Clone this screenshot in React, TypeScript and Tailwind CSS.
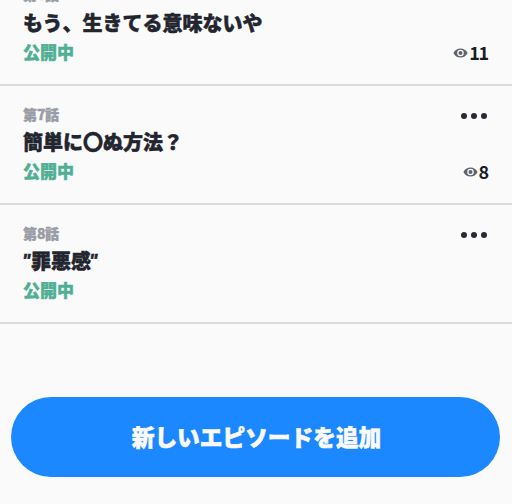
type Episode = { no: number; title: string; views?: number };

const episodes: Episode[] = [
  { no: 6, title: 'もう、生きてる意味ないや', views: 11 },
  { no: 7, title: '簡単に〇ぬ方法？', views: 8 },
  { no: 8, title: '”罪悪感”' },
];

function EyeIcon() {
  return (
    <svg className="h-[10px] w-[15px]" viewBox="0 0 15 10" fill="none">
      <path
        fillRule="evenodd"
        d="M.4 5C1.900 1.900 4.400.4 7.500.4S13.100 1.900 14.600 5C13.100 8.100 10.600 9.600 7.500 9.600S1.900 8.100.4 5ZM7.500 1.700A3.300 3.300 0 1 0 7.500 8.300A3.300 3.300 0 1 0 7.500 1.700Z"
        fill="#5f626c"
      />
      <circle cx="7.5" cy="5" r="2" fill="#5f626c" />
    </svg>
  );
}

function EpisodeRow({ no, title, views }: Episode) {
  return (
    <li className="flex h-[119px] justify-between border-b-2 border-[#dadbdc] pl-[23px] pr-[23px] pt-[19px] first:pt-[18px]">
      <div className="flex flex-col whitespace-nowrap font-black">
        <span className="flex h-[18px] items-center text-[14px] leading-[18px] text-[#999ca4] [-webkit-text-stroke:0.4px_#999ca4]">
          第<span className="inline-block w-[8px] text-center text-[14px]">{no}</span>話
        </span>
        <h2 className={`${no === 6 ? 'mt-[6px]' : 'mt-[5px]'} h-[28px] text-[20px] leading-[28px] text-[#22242e] [-webkit-text-stroke:0.5px_#22242e]`}>
          {title.startsWith('”') ? (
            <span className="flex">
              <i className="w-[8px] -translate-x-px font-['Liberation_Sans'] text-[18px]">"</i>
              {title.slice(1, -1)}
              <i className="w-[8px] -translate-x-[2px] font-['Liberation_Sans'] text-[18px]">"</i>
            </span>
          ) : (
            title
          )}
        </h2>
        <span className="mt-[3px] h-[24px] text-[17px] leading-[24px] text-[#4fae93] [-webkit-text-stroke:0.4px_#4fae93]">
          公開中
        </span>
      </div>
      <div className="flex flex-col items-end">
        <button className="mt-[8px] flex h-[6px] gap-[4px] pr-[2px]" aria-label="メニュー">
          <span className="size-[6px] rounded-full bg-[#282a34]" />
          <span className="size-[6px] rounded-full bg-[#282a34]" />
          <span className="size-[6px] rounded-full bg-[#282a34]" />
        </button>
        {views !== undefined && (
          <div className={`${no === 6 ? 'mt-[42px]' : 'mt-[41px]'} flex h-[24px] items-center gap-px`}>
            <EyeIcon />
            <span className="pb-[2px] pr-px text-[18px] font-bold leading-[24px] tracking-[-1.2px] text-[#1b1d25]">
              {views}
            </span>
          </div>
        )}
      </div>
    </li>
  );
}

export default function App() {
  return (
    <main className="h-[504px] w-[512px] overflow-hidden bg-[#fafafa] font-['Noto_Sans_CJK_JP',sans-serif]">
      <ul className="-mt-[33px]">
        {episodes.map((e) => (
          <EpisodeRow key={e.no} {...e} />
        ))}
      </ul>
      <div className="pl-[11px] pr-[12px] pt-[73px]">
        <button className="flex h-[80px] w-full items-center justify-center rounded-full bg-[#1b88ff] pl-[2px] text-[22.7px] font-black leading-none text-[#fafafa] [-webkit-text-stroke:0.6px_#fafafa]">
          新しいエピソードを追加
        </button>
      </div>
    </main>
  );
}
